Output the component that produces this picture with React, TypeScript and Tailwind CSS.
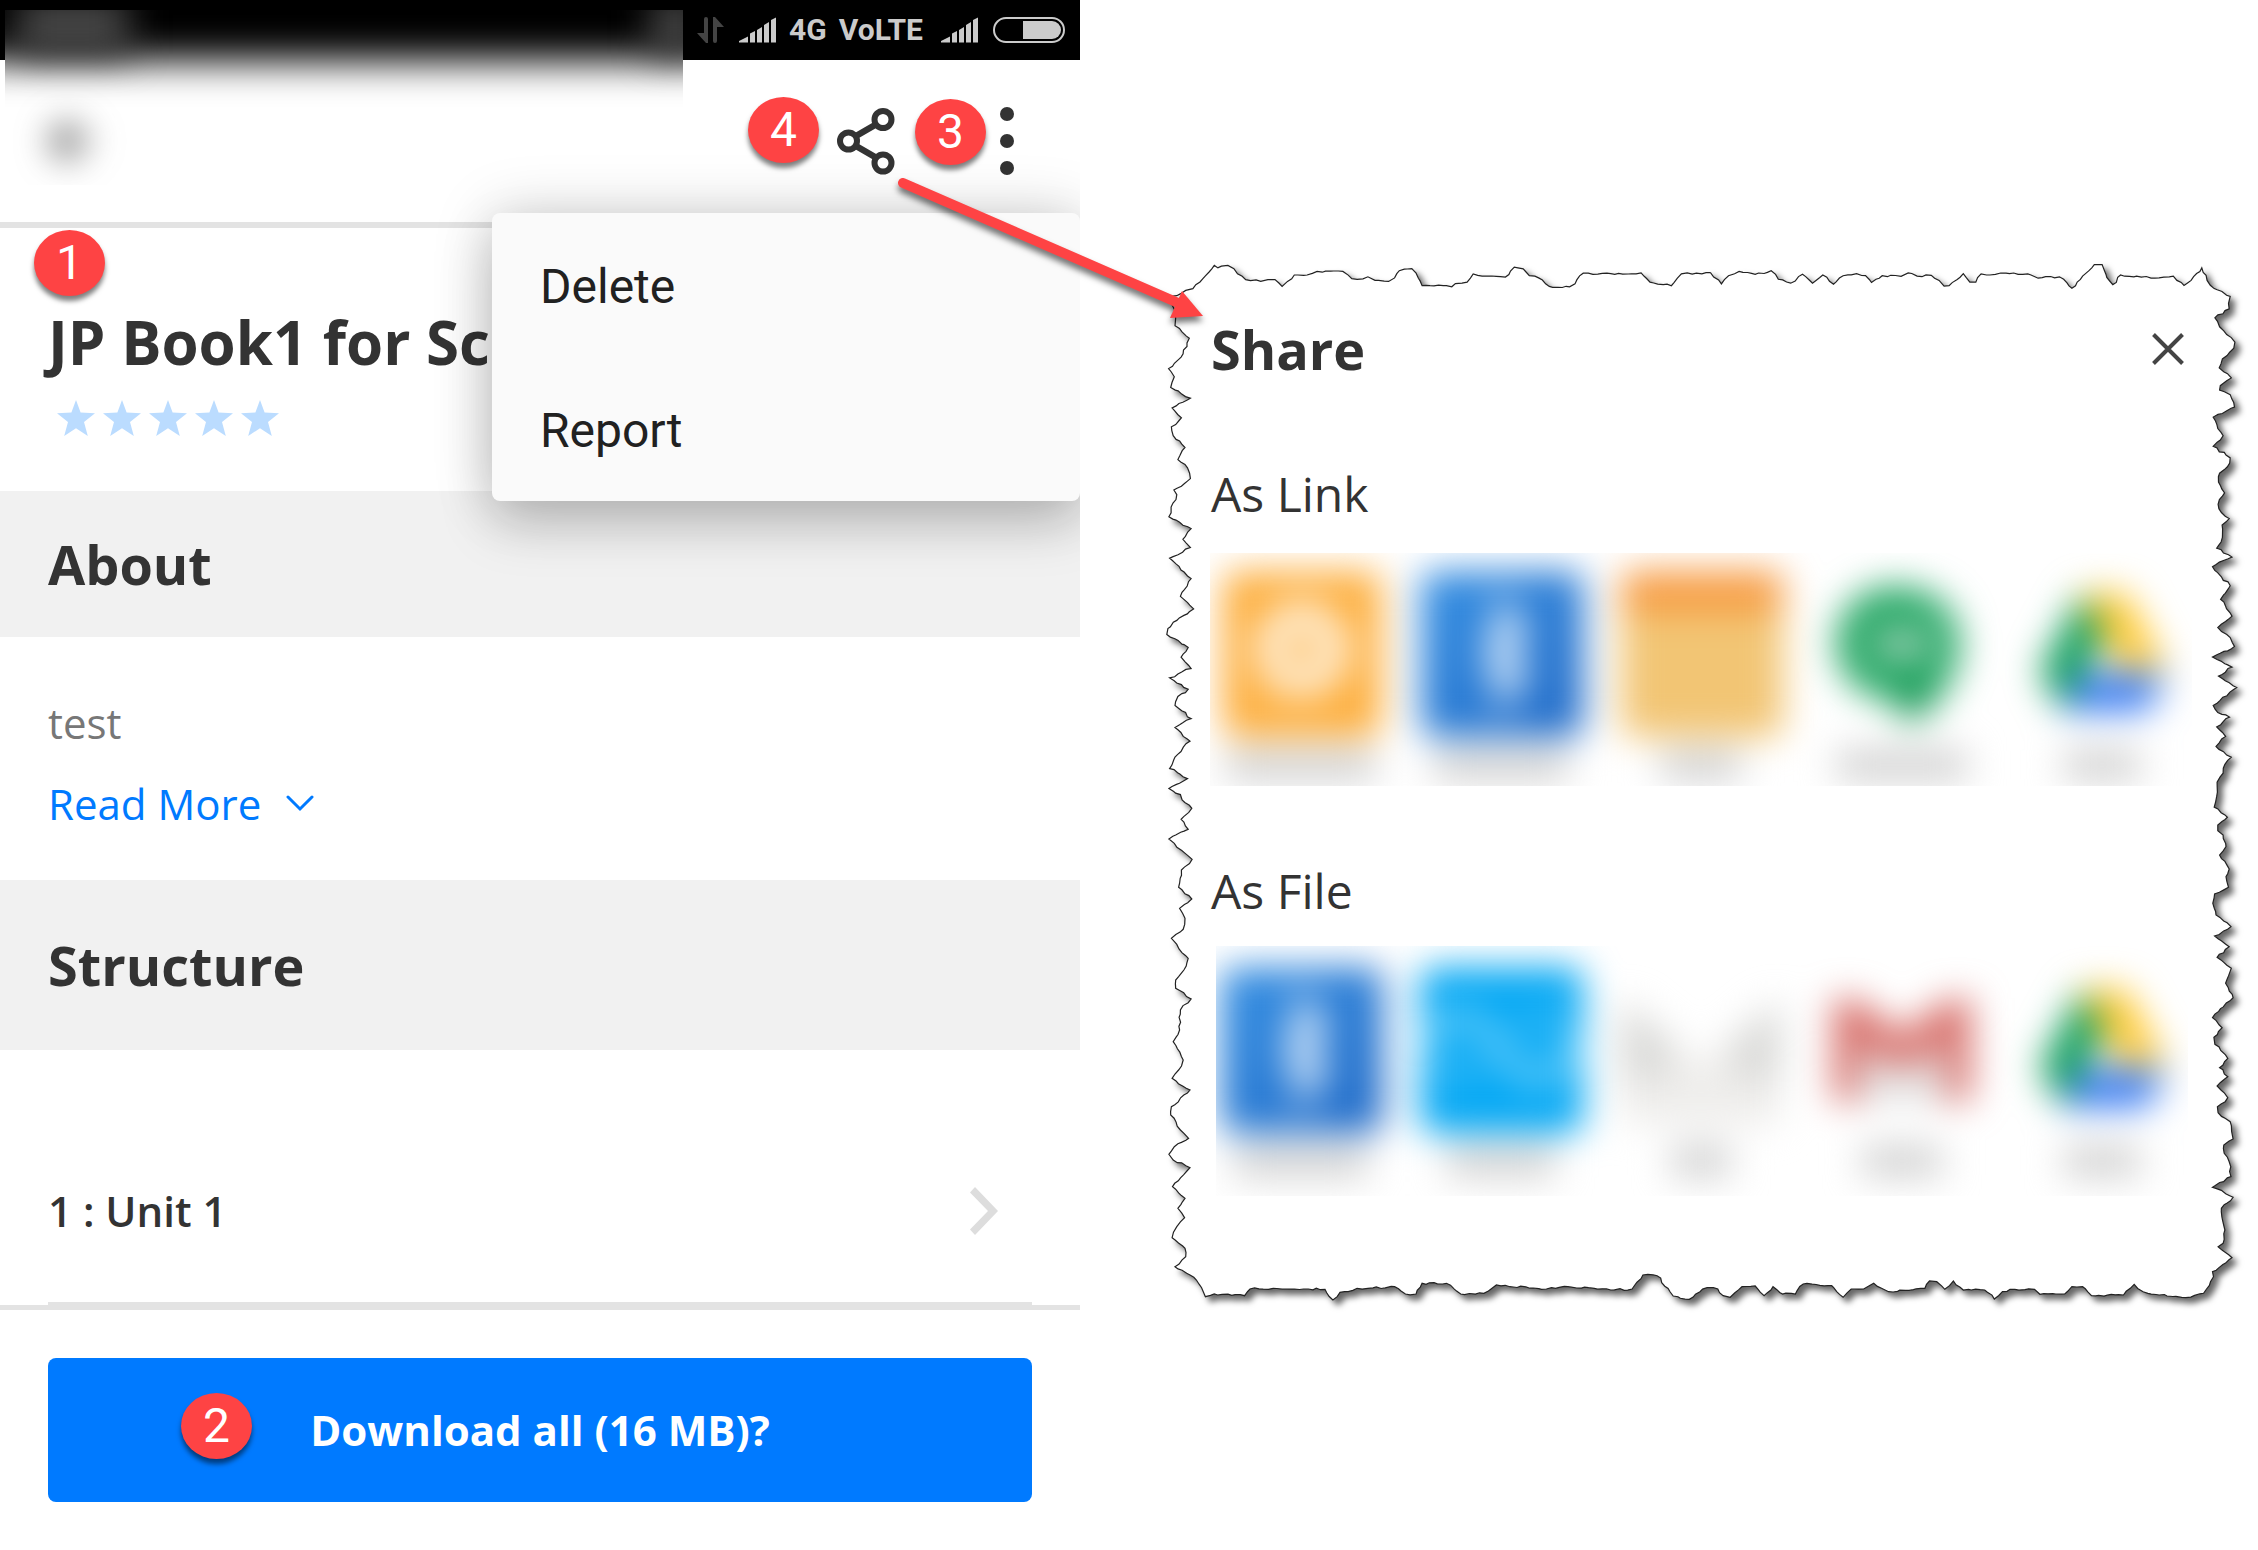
import React from "react";
import { ArrowLeft } from "lucide-react";

/* ---------- torn paper outline, traced in overlapping tiles ---------- */
type Tile = { ox: number; oy: number; sx: number; sy: number; pts: string };

const TILES: Tile[] = [
  {
    ox: -10, oy: -12, sx: 2.8, sy: 2.8,
    pts: "58,130 75,128 100,113 120,108 148,80 180,43 190,50 200,45 218,43 235,52 245,67 268,83 310,88 330,83 350,83 370,102 385,88 404,70 440,70 468,60 540,60 565,80 580,82 610,75 630,85 668,88 685,78 698,58 733,52 745,65 762,100 830,100 845,103 855,94 888,90 905,67 930,73 995,76 1020,48 1045,53 1062,72 1088,78 1118,102 1175,103 1190,95 1213,65 1240,68 1290,66 1375,64 1400,90 1460,100 1488,67 1530,65 1568,63",
  },
  {
    ox: 540, oy: -12, sx: 2.81, sy: 2.8,
    pts: "30,64 60,95 80,72 110,60 155,68 200,58 220,82 255,93 288,68 316,93 345,70 375,96 402,72 440,66 465,72 482,91 512,72 565,74 585,64 610,73 650,71 672,85 686,101 700,100 740,66 758,90 775,90 790,67 830,68 860,65 930,70 950,79 1010,75 1022,82 1045,107 1060,90 1108,41 1130,41 1143,77 1160,97 1182,70 1240,76 1290,78 1330,73 1340,85 1360,99 1380,85 1410,50 1425,85 1445,108 1490,130 1485,150 1487,165 1447,190 1460,215 1480,237 1503,258 1500,275 1468,305 1459,330 1493,358 1462,380 1460,392 1490,405 1502,440 1442,468 1455,500 1470,520 1442,550 1490,582 1482,607 1460,625 1457,650 1474,680 1456,712 1465,735 1487,752 1467,770 1468,805 1452,835 1495,860 1440,887 1465,915 1490,940 1463,978 1495,1025 1455,1057 1490,1085 1502,1110 1440,1140 1495,1168 1457,1193 1508,1225 1442,1275 1455,1295 1488,1308 1452,1335 1477,1362 1450,1390 1493,1420 1475,1440 1470,1465 1453,1490 1452,1530 1445,1560",
  },
  {
    ox: 540, oy: 538, sx: 2.81, sy: 3,
    pts: "1482,52 1455,75 1455,92 1470,105 1478,140 1460,165 1487,207 1478,230 1485,262 1446,282 1441,310 1450,345 1492,380 1446,408 1487,440 1453,472 1493,505 1477,550 1498,593 1440,653 1467,683 1444,712 1447,733 1483,775 1460,803 1483,830 1453,858 1483,893 1454,920 1456,938 1490,965 1498,1017 1472,1035 1473,1060 1487,1085 1492,1130 1440,1162 1498,1192 1465,1225 1475,1290 1470,1330 1456,1340 1495,1373 1440,1415 1443,1430 1415,1480 1365,1493 1290,1485 1245,1475 1220,1453 1190,1485 1100,1487 1075,1460 1045,1460 1025,1482 955,1483 940,1468 885,1468 850,1475 827,1497 800,1470 740,1470 712,1443 688,1468 665,1445 645,1443 632,1465 530,1475 510,1465 488,1450 460,1467 425,1467 402,1492 370,1457 290,1452 268,1482 232,1482 205,1460 180,1487 155,1458 118,1460 85,1492 65,1487 50,1467 20,1463 0,1475",
  },
  {
    ox: -10, oy: 538, sx: 2.8, sy: 3,
    pts: "1510,1498 1465,1488 1420,1427 1380,1425 1350,1467 1290,1470 1170,1460 1110,1467 970,1455 935,1480 870,1482 830,1450 762,1450 745,1482 715,1482 685,1460 610,1465 580,1465 555,1475 532,1477 512,1500 490,1468 345,1465 280,1467 265,1487 180,1482 155,1490 130,1440 70,1400 100,1370 98,1345 62,1313 75,1280 97,1253 78,1225 98,1195 63,1160 112,1103 65,1080 53,1063 68,1040 108,1015 85,990 58,945 60,920 112,870 62,835 80,810 93,780 65,725 83,690 85,630 115,597 72,565 72,540 95,510 107,475 60,415 93,388 98,355 83,325 117,297 80,262 88,210 118,178 68,130 53,117 107,88 87,58 117,25 90,0",
  },
  {
    ox: -10, oy: -12, sx: 2.8, sy: 2.8,
    pts: "85,1525 53,1508 105,1480 55,1452 70,1420 112,1375 70,1337 115,1312 70,1275 78,1250 107,1230 55,1198 115,1172 87,1140 107,1113 47,1077 50,1060 75,1037 122,1005 85,970 115,920 55,863 113,833 92,810 115,780 53,747 75,685 67,672 113,640 105,610 78,587 98,553 65,520 60,495 88,470 62,442 113,415 58,385 68,355 52,332 87,300 110,247 70,212 72,190",
  },
];

/* Joins the tiles and roughens each segment a little, like torn fibres. */
function tornOutline(): string {
  const base = TILES.flatMap((t) =>
    t.pts.split(" ").map((p) => {
      const [x, y] = p.split(",").map(Number);
      return [t.ox + x / t.sx, t.oy + y / t.sy];
    }),
  );
  let seed = 7;
  const rnd = () => {
    seed = (seed * 16807) % 2147483647;
    return seed / 2147483647 - 0.5;
  };
  const out: string[] = [];
  base.forEach(([x, y], i) => {
    const [nx, ny] = base[(i + 1) % base.length];
    out.push(`${x.toFixed(1)},${y.toFixed(1)}`);
    const steps = Math.floor(Math.hypot(nx - x, ny - y) / 4);
    for (let k = 1; k < steps; k++) {
      const t = k / steps;
      out.push(`${(x + (nx - x) * t + rnd() * 2).toFixed(1)},${(y + (ny - y) * t + rnd() * 2).toFixed(1)}`);
    }
  });
  return out.join(" ");
}
const OUTLINE = tornOutline();

/* ------------------------------- small parts ------------------------------ */
function Badge({ n, className }: { n: number; className: string }) {
  return (
    <span
      className={`absolute flex h-[66px] w-[71px] items-center justify-center rounded-[50%] bg-[#fe4344] font-[Roboto,sans-serif] text-[48px] leading-[66px] text-white shadow-[0_5px_5px_rgba(0,0,0,0.5)] ${className}`}
    >
      {n}
    </span>
  );
}

function Signal() {
  return (
    <svg className="h-[26px] w-[38px]" viewBox="0 0 38 26" fill="#cbcbcb" aria-hidden="true">
      <path d="M0 25.500V24L9 19.500V25.500ZM11 25.500V16.500L16 14V25.500ZM18 25.500V13L23 10V25.500ZM25 25.500V8L30 5V25.500ZM32 25.500V3L37 0.500V25.500Z" />
    </svg>
  );
}

function Star() {
  return (
    <svg className="h-[36px] w-[38px]" viewBox="0 0 38 36" fill="#bbdcff" aria-hidden="true">
      <path d="M19 0l4.600 12.600L38 13.200 27 22l3.800 14L19 28.200 7.200 36 11 22 0 13.200l14.400-.6z" />
    </svg>
  );
}

/* -------------------------------- app icons ------------------------------- */
function OrangeIcon() {
  return (
    <>
      <rect x="22" y="18" width="158" height="166" rx="14" fill="#fdae3c" />
      <circle cx="101" cy="96" r="32" fill="none" stroke="#fff0da" strokeWidth="32" />
      <path d="M62 110L66 148L96 134Z" fill="#fee0b4" />
    </>
  );
}
function BluetoothIcon() {
  return (
    <>
      <defs>
        <linearGradient id="bt" x1="0" y1="0" x2="1" y2="1">
          <stop offset="0" stopColor="#3691e4" />
          <stop offset="1" stopColor="#1f68c6" />
        </linearGradient>
      </defs>
      <rect x="20" y="18" width="162" height="166" rx="14" fill="url(#bt)" />
      <path d="M86 80L120 122L103 142V58L120 78L86 120" fill="none" stroke="#cde2f8" strokeWidth="16" />
    </>
  );
}
function NotesIcon() {
  return (
    <>
      <rect x="20" y="18" width="162" height="166" rx="14" fill="#f2c574" />
      <path d="M20 58V32Q20 18 34 18H168Q182 18 182 32V58Z" fill="#f79a40" />
    </>
  );
}
function HangoutsIcon() {
  return (
    <>
      <path d="M101 34A57 57 0 1 0 92 147L106 172Q156 138 158 92A57 57 0 0 0 101 34Z" fill="#25a865" />
      <path d="M92 136L106 170L138 138Z" fill="#0c8c4a" />
      <rect x="74" y="80" width="52" height="22" rx="4" fill="#c4dccf" />
    </>
  );
}
function DriveIcon() {
  return (
    <>
      <path d="M78 42L38 118L60 158L104 80Z" fill="#0b9c56" />
      <path d="M78 40H124L164 116H120Z" fill="#ffc72e" />
      <path d="M80 120H164L146 158H60Z" fill="#3378f2" />
    </>
  );
}
function ShareItIcon() {
  return (
    <>
      <rect x="19" y="18" width="163" height="166" rx="14" fill="#04a8f4" />
      <path d="M24 96C40 60 74 60 94 92S140 154 176 96" fill="none" stroke="#70d0fa" strokeWidth="18" />
      <path d="M116 84C132 60 160 62 174 96M28 104C40 136 62 130 82 112" fill="none" stroke="#52c3f8" strokeWidth="12" />
    </>
  );
}
function MailIcon() {
  return (
    <>
      <path d="M20 54L100 114L180 54V164Q180 176 168 176H32Q20 176 20 164Z" fill="#efeeec" />
      <path d="M20 50L70 90V130H20ZM180 50L130 90V130H180Z" fill="#dadad8" />
    </>
  );
}
function GmailIcon() {
  return (
    <>
      <path d="M44 60L100 104L156 60V154H44Z" fill="#e4e4e4" />
      <path d="M31 152V50H54L100 84L146 50H169V152H143V96L100 122L57 96V152Z" fill="#d8706b" />
    </>
  );
}

type AppEntry = { name: string; bar: number; Icon: () => React.ReactElement };
const LINK_APPS: AppEntry[] = [
  { name: "Messaging", bar: 150, Icon: OrangeIcon },
  { name: "Bluetooth", bar: 134, Icon: BluetoothIcon },
  { name: "Notes", bar: 80, Icon: NotesIcon },
  { name: "Hangouts", bar: 130, Icon: HangoutsIcon },
  { name: "Drive", bar: 76, Icon: DriveIcon },
];
const FILE_APPS: AppEntry[] = [
  { name: "Bluetooth", bar: 134, Icon: BluetoothIcon },
  { name: "SHAREit", bar: 108, Icon: ShareItIcon },
  { name: "Mail", bar: 60, Icon: MailIcon },
  { name: "Gmail", bar: 80, Icon: GmailIcon },
  { name: "Drive", bar: 76, Icon: DriveIcon },
];

function AppRow({ apps, className }: { apps: AppEntry[]; className: string }) {
  return (
    <div className={`grid grid-cols-5 blur-[18px] ${className}`}>
      {apps.map(({ name, bar, Icon }) => (
        <button key={name} type="button" aria-label={name} className="flex flex-col items-center">
          <svg className="h-[200px] w-[200px]" viewBox="0 0 200 200" aria-hidden="true">
            <Icon />
          </svg>
          <span className="-mt-1 h-8 bg-[#d2d2d2]" style={{ width: bar }} />
        </button>
      ))}
    </div>
  );
}

/* --------------------------------- screens -------------------------------- */
function Phone() {
  return (
    <main className="relative overflow-hidden bg-white text-[#333333]">
      <div className="flex h-[60px] items-center justify-end bg-black pr-[15px]">
        <svg className="mr-[15px] h-[26px] w-[27px]" viewBox="0 0 27 26" fill="#444444" aria-hidden="true">
          <path d="M7 2Q7 0 9 0T11 2V26H9L0 16H7ZM16 0H18L27 10H20V24Q20 26 18 26T16 24Z" />
        </svg>
        <Signal />
        <span className="mr-[18px] ml-3 flex gap-3 font-[Roboto,sans-serif] text-[30px] font-bold leading-[40px] text-[#cbcbcb]">
          <span>4G</span>
          <span>VoLTE</span>
        </span>
        <Signal />
        <svg className="ml-[14px] h-[26px] w-[72px]" viewBox="0 0 72 26" aria-hidden="true">
          <rect x="1" y="1" width="70" height="24" rx="12" fill="none" stroke="#cbcbcb" strokeWidth="2" />
          <path d="M30 4H59A9 9 0 0 1 59 22H30Z" fill="#cbcbcb" />
        </svg>
      </div>

      <header className="flex h-[168px] items-center justify-end border-b-[6px] border-[#e3e3e3] pr-16">
        <button type="button" aria-label="Share" className="mr-[102px]">
          <svg className="h-[68px] w-[60px]" viewBox="0 0 60 68" fill="none" stroke="#333333" aria-hidden="true">
            <path d="M20 29L39 18M20 39L39 50" strokeWidth="6.500" />
            <circle cx="12.500" cy="34" r="8.500" strokeWidth="6" />
            <circle cx="47" cy="12.500" r="8.500" strokeWidth="6" />
            <circle cx="47" cy="56" r="8.500" strokeWidth="6" />
          </svg>
        </button>
        <button type="button" aria-label="More options">
          <svg className="h-[68px] w-[18px]" viewBox="0 0 18 68" fill="#333333" aria-hidden="true">
            <circle cx="9" cy="7" r="7" />
            <circle cx="9" cy="34" r="7" />
            <circle cx="9" cy="61" r="7" />
          </svg>
        </button>
      </header>

      <section className="px-12 pt-[74px] pb-[55px]">
        <h1 className="whitespace-nowrap text-[60px] font-bold leading-[80px]">JP Book1 for Sc</h1>
        <div className="mt-[18px] ml-[9px] flex gap-2" role="img" aria-label="0 of 5 stars">
          <Star />
          <Star />
          <Star />
          <Star />
          <Star />
        </div>
      </section>

      <h2 className="bg-[#f1f1f1] px-12 py-[37px] text-[54px] font-bold leading-[72px]">About</h2>
      <section className="px-12 pt-[58px] pb-12 text-[42px] leading-[56px]">
        <p className="text-[#777777]">test</p>
        <button type="button" className="mt-[25px] flex items-center gap-6 text-[#007aff]">
          Read More
          <svg className="h-[18px] w-[30px]" viewBox="0 0 30 18" fill="none" stroke="currentColor" strokeWidth="3" strokeLinecap="round" aria-hidden="true">
            <path d="M3 2L15 14L27 2" />
          </svg>
        </button>
      </section>

      <h2 className="bg-[#f1f1f1] px-12 py-[49px] text-[54px] font-bold leading-[72px]">Structure</h2>
      <section className="px-12 pt-[71px]">
        <a href="#unit-1" className="flex items-center justify-between border-b-[3px] border-[#e3e3e3] pt-[62px] pb-[63px] pr-[34px] text-[42px] font-semibold leading-[56px]">
          1 : Unit 1
          <svg className="h-[48px] w-[28px]" viewBox="0 0 28 48" fill="#dddddd" aria-hidden="true">
            <path d="M5 0L28 24L5 48L0 42.500L18 24L0 5.500Z" />
          </svg>
        </a>
      </section>

      <footer className="border-t-[5px] border-[#e3e3e3] px-12 py-12">
        <button type="button" className="w-full rounded-lg bg-[#007aff] py-11 text-center text-[42px] font-bold leading-[56px] text-white">
          Download all (16 MB)?
        </button>
      </footer>

      {/* smeared notification area and back arrow */}
      <div className="absolute top-[10px] left-[5px] h-[175px] w-[678px] overflow-hidden bg-white">
        <div className="-mx-16 -mt-16 h-[115px] bg-black blur-[19px]" />
        <div className="absolute -top-3 left-3 h-14 w-28 bg-[#484848] blur-[18px]" />
        <div className="absolute -top-3 -right-4 h-14 w-12 bg-[#484848] blur-[18px]" />
        <ArrowLeft className="absolute top-[103px] left-[37px] h-14 w-14 text-[#555555] blur-[17px]" strokeWidth={4} aria-hidden="true" />
      </div>

      <ul className="absolute top-[213px] right-0 w-[588px] rounded-lg bg-[#fafafa] font-[Roboto,sans-serif] text-[48px] leading-[56px] text-[#212121] shadow-[0_0_60px_rgba(0,0,0,0.18),0_24px_54px_rgba(0,0,0,0.18)]">
        <li>
          <button type="button" className="w-full px-12 pt-[46px] pb-[42px] text-left">Delete</button>
        </li>
        <li>
          <button type="button" className="w-full px-12 pt-[46px] pb-[42px] text-left">Report</button>
        </li>
      </ul>

      <Badge n={1} className="top-[230px] left-[34px]" />
      <Badge n={2} className="top-[1393px] left-[181px]" />
      <Badge n={3} className="top-[99px] right-[94px]" />
      <Badge n={4} className="top-[97px] right-[261px]" />
    </main>
  );
}

function ShareCard() {
  return (
    <aside className="relative mt-[262px] mr-4 ml-20 self-start px-[50px] pt-[51px] pb-[112px] text-[#333333]">
      <svg
        className="absolute inset-0 h-full w-full overflow-visible drop-shadow-[5px_5px_3px_rgba(0,0,0,0.6)]"
        viewBox="0 0 1082 1046"
        preserveAspectRatio="none"
        aria-hidden="true"
      >
        <polygon points={OUTLINE} fill="#ffffff" stroke="#222222" strokeWidth="1.200" />
      </svg>
      <div className="relative">
        <div className="flex items-center justify-between pr-2 pl-px">
          <h2 className="text-[54px] font-bold leading-[72px]">Share</h2>
          <button type="button" aria-label="Close">
            <svg className="h-[32px] w-[32px]" viewBox="0 0 32 32" stroke="#444444" strokeWidth="4" aria-hidden="true">
              <path d="M1.500 1.500L30.500 30.500M30.500 1.500L1.500 30.500" />
            </svg>
          </button>
        </div>
        <h3 className="mt-[77px] pl-px text-[48px] leading-[64px]">As Link</h3>
        <div className="mt-[27px] h-[233px] overflow-hidden">
          <AppRow apps={LINK_APPS} className="-mr-[10px] -ml-[9px]" />
        </div>
        <h3 className="mt-[73px] pl-px text-[48px] leading-[64px]">As File</h3>
        <div className="mt-[23px] mr-1 ml-[6px] h-[250px] overflow-hidden">
          <AppRow apps={FILE_APPS} className="-mr-[14px] -ml-[15px] pt-[3px]" />
        </div>
      </div>
    </aside>
  );
}

export default function App() {
  return (
    <div className="relative grid min-h-screen grid-cols-[1080fr_1178fr] bg-white font-['Open_Sans',sans-serif]">
      <Phone />
      <ShareCard />
      <svg
        className="pointer-events-none absolute top-[170px] left-[890px] h-[160px] w-[320px] drop-shadow-[0_5px_3px_rgba(0,0,0,0.55)]"
        viewBox="0 0 320 160"
        aria-hidden="true"
      >
        <path d="M13 13L286 132" stroke="#fe4344" strokeWidth="10" strokeLinecap="round" />
        <path d="M313 146L292 121L280 148Z" fill="#fe4344" />
      </svg>
    </div>
  );
}
